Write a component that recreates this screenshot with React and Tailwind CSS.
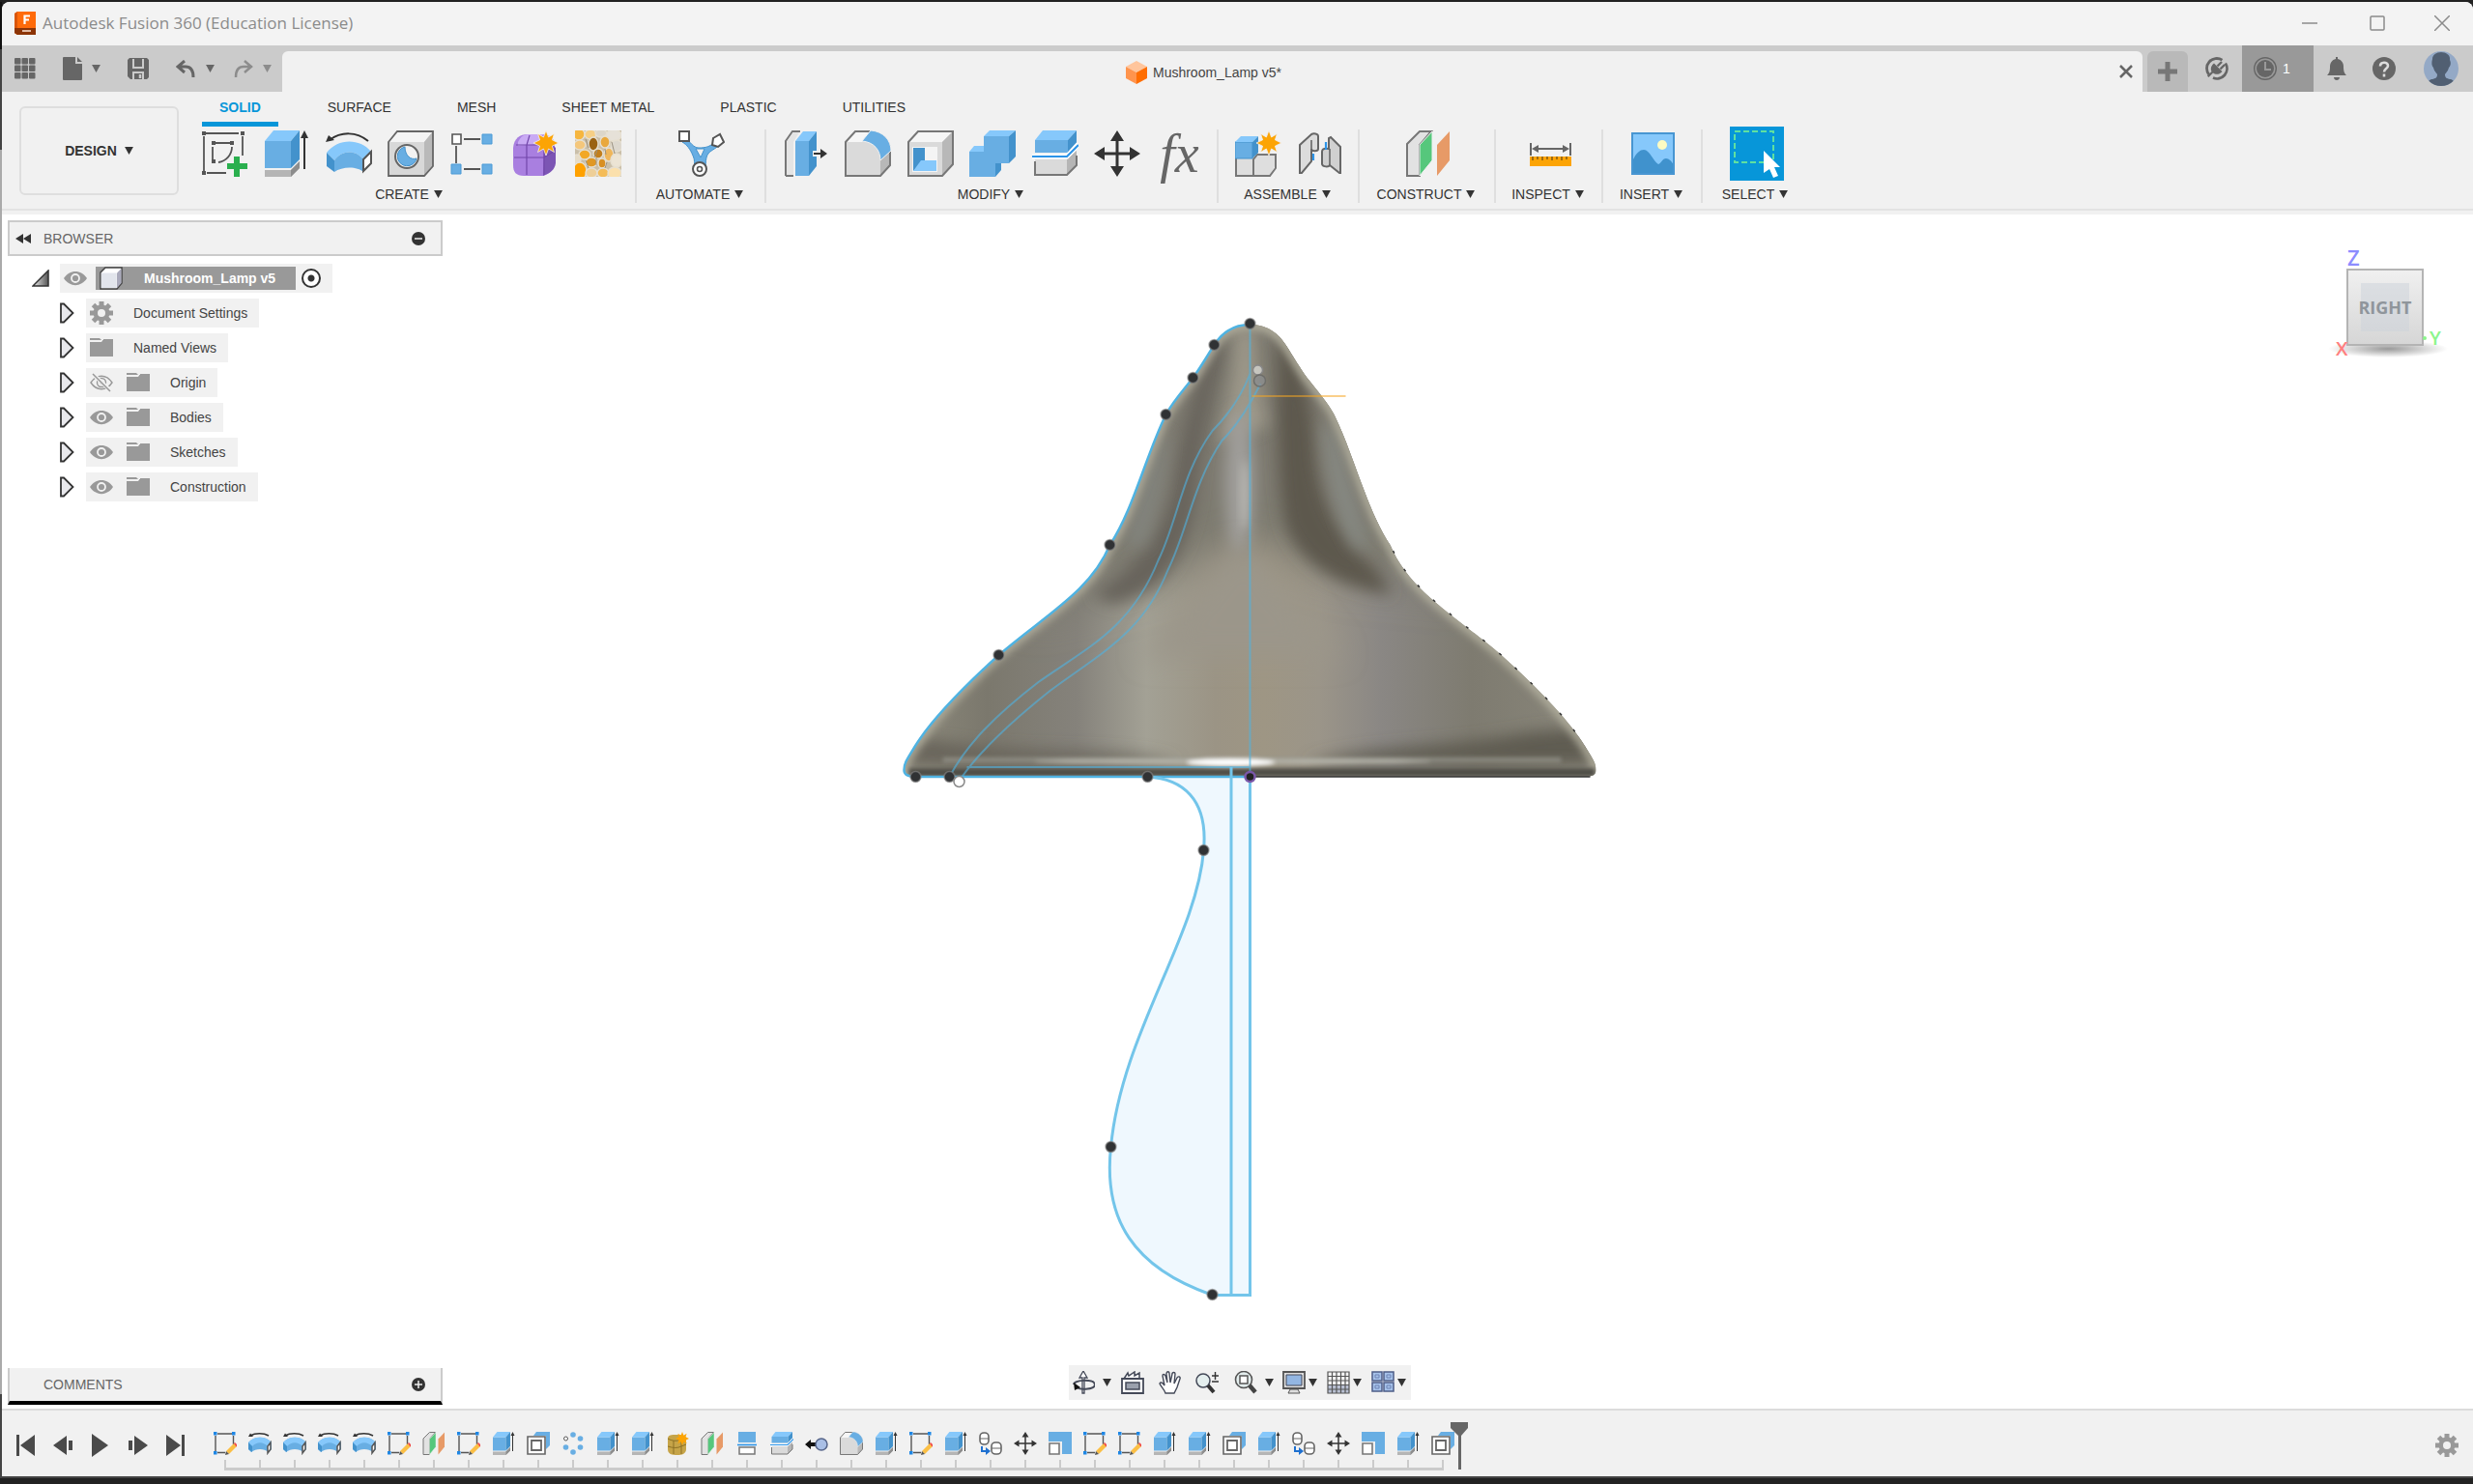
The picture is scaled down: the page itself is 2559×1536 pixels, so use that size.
import React from "react";

const DARK = "#555";
const BLUE = "#68aee3";
const BLUE_L = "#86c8fb";
const BLUE_D = "#4392cc";

function Icon({ size = 48, vb = "0 0 48 48", className = "", children }) {
  return (
    <svg width={size} height={size} viewBox={vb} className={className} fill="none" aria-hidden="true">
      {children}
    </svg>
  );
}

function Caret({ color = "#333" }) {
  return (
    <svg width="9" height="8" viewBox="0 0 10 9" className="shrink-0" aria-hidden="true">
      <path d="M0 0h10L5 9z" fill={color} />
    </svg>
  );
}

const starPath = "M0-13 2.6-6 8.5-9.5 6.4-3.2 13 0 6.4 3.2 8.5 9.5 2.6 6 0 13-2.6 6-8.5 9.5-6.4 3.2-13 0-6.4-3.2-8.5-9.5-2.6-6z";

/* ---------- ribbon icons ---------- */
const NewSketch = () => (
  <Icon>
    <path d="M5 3h34M3 6v36M43 6v20M6 44h20M14 13h16M12 17v13M32 17c0 8-6 15-14 16" stroke={DARK} strokeWidth="1.8" />
    <path d="M1 1h4v4H1zM41 1h4v4h-4zM1 42h4v4H1zM11 11h4v4h-4zM30 11h4v4h-4zM11 30h4v4h-4z" fill={DARK} />
    <path d="M34 27h6v7h8v6h-8v8h-6v-8h-7v-6h7z" fill="#2aaf4e" />
  </Icon>
);
const Extrude = ({ size }) => (
  <Icon size={size}>
    <path d="M2 41h27l9-9v7l-9 9H2z" fill="#b5b5b5" />
    <path d="M29 41l9-9v7l-9 9z" fill="#8d8d8d" />
    <path d="M2 11h27v28H2z" fill={BLUE} />
    <path d="M2 11 11 0h27l-9 11z" fill={BLUE_L} />
    <path d="M29 11 38 0v30l-9 9z" fill={BLUE_D} />
    <path d="M43 40V6" stroke="#333" strokeWidth="2" />
    <path d="M39 8l4-8 4 8z" fill="#333" />
  </Icon>
);
const Revolve = ({ size }) => (
  <Icon size={size}>
    <path d="M4 10C16 1 32 1 44 11" stroke="#333" strokeWidth="2" />
    <path d="M0 12 3 5l6 5z" fill="#333" />
    <path d="M1 23C13 8 35 8 47 22l-8 8C31 20 17 20 9 31z" fill={BLUE_L} />
    <path d="M1 23v14l8 6V31z" fill={BLUE_D} />
    <path d="M9 31C17 20 31 20 39 30v13C33 37 17 37 9 43z" fill={BLUE} />
    <path d="M39 30l8-8v12l-8 8z" fill="#fff" stroke={DARK} strokeWidth="2" />
  </Icon>
);
const Hole = () => (
  <Icon>
    <path d="M1 12 10 1h37v36l-9 10H1z" fill="#d8d8d8" />
    <path d="M1 12 10 1h37l-9 11z" fill="#f4f4f4" />
    <path d="M38 12 47 1v36l-9 10z" fill="#b9b9b9" />
    <path d="M1 12 10 1h37v36l-9 10H1z" stroke="#666" strokeWidth="1.8" />
    <circle cx="20" cy="27" r="12" fill="#f2f2f2" stroke="#666" strokeWidth="2" />
    <path d="M18 17a10 10 0 1 0 12 12c-6 2-12-3-12-12z" fill={BLUE} stroke={BLUE_D} />
  </Icon>
);
const Pattern = () => (
  <Icon>
    <path d="M14 9h17M6 16v18M14 40h17" stroke={DARK} strokeWidth="1.8" />
    <path d="M2 4h9v10H2z" fill="#fff" stroke={DARK} strokeWidth="1.6" />
    <path d="M33 4h10v10H33zM1 35h10v10H1zM33 35h10v10H33z" fill={BLUE} stroke="#4a9ad6" />
  </Icon>
);
const Form = () => (
  <Icon>
    <path d="M1 18C2 8 8 4 16 4h14c10 0 14 5 14 12v18c-1 8-6 11-12 13H12C4 47 1 43 1 36z" fill="#a97fe0" />
    <path d="M32 47c7-3 12-6 13-13V18c-3-4-8-4-12-3z" fill="#7c55b4" />
    <path d="M6 12C9 6 12 4 18 4h14l-4 10-22 2z" fill="#c9aaf4" />
    <path d="M18 5l-3 10v31M2 28h31l11-7M33 16v30M4 15h28" stroke="#7247aa" strokeWidth="1.2" />
    <path d={starPath} transform="translate(35 13)" fill="#fca405" stroke="#f1f1f1" strokeWidth=".8" />
  </Icon>
);
const Voronoi = () => {
  const cells = [
    [4, 4, 6, 6, "#f6b63f"], [16, 4, 6, 5, "#f6cf85"], [27, 3, 6, 4, "#dcd6ca"], [40, 5, 8, 6, "#e6e1d8"],
    [5, 15, 6, 5, "#f4c77c"], [19, 14, 5, 7, "#9a6213"], [31, 12, 5, 6, "#e9a83c"], [43, 16, 6, 6, "#ddd8ce"],
    [10, 25, 6, 5, "#f2a827"], [24, 24, 5, 5, "#c27f1d"], [35, 25, 5, 7, "#efb65a"], [2, 30, 4, 5, "#e6dcc8"],
    [17, 33, 6, 5, "#e09825"], [28, 34, 4, 5, "#d88f22"], [43, 31, 6, 7, "#ece4d4"], [5, 42, 7, 9, "#ffa100"],
    [17, 44, 6, 5, "#eecf98"], [29, 44, 6, 5, "#f4bc58"], [41, 44, 7, 6, "#fbe0ac"],
  ];
  return (
    <Icon>
      <path d="M0 0h48v48H0z" fill="#cabfa9" />
      {cells.map(([x, y, rx, ry, c], i) => (
        <ellipse key={i} cx={x} cy={y} rx={rx} ry={ry} fill={c} stroke="#e6dfd0" strokeWidth="1.4" />
      ))}
      <path d="M11 9l3 9M23 20l-3 8M31 19l1 6M22 28v8M33 33l-2 6M11 31l3 8M38 12l3 12" stroke="#9a9180" strokeWidth="1" />
    </Icon>
  );
};
const Automate = () => (
  <Icon>
    <path d="M8 9c4 2 7 9 13 9 7 0 12-1 16-6l4 4c-5 5-10 5-12 12-1 5-1 8 0 12H16c1-5 1-10-1-14C12 19 9 15 4 12z" fill={BLUE} stroke={BLUE_D} />
    <path d="M18 19h9l-4 9z" fill="#f1f1f1" stroke={BLUE_D} />
    <path d="M1 1h10v10H1z" fill="#fff" stroke={DARK} strokeWidth="2" />
    <path d="M36 8l7-4 4 8-6 5-6-2z" fill="#fff" stroke={DARK} strokeWidth="2" />
    <circle cx="22" cy="40" r="7" fill="#fff" stroke={DARK} strokeWidth="2" />
    <circle cx="22" cy="40" r="2.5" stroke={DARK} strokeWidth="1.6" />
  </Icon>
);
const PressPull = () => (
  <Icon>
    <path d="M3 47V11L10 1h8M3 47h8" stroke="#777" strokeWidth="2" />
    <path d="M4 12 11 2h6l-6 10v34H4z" fill="#e4e4e4" />
    <path d="M13 11h14v36H13z" fill={BLUE} />
    <path d="M13 11 21 1h14l-8 10z" fill={BLUE_L} />
    <path d="M27 11 35 1v36l-8 10z" fill={BLUE_D} />
    <path d="M31 21h9v6h-9z" fill="#f1f1f1" />
    <path d="M32 24h9" stroke="#333" strokeWidth="2" />
    <path d="M39 19v10l7-5z" fill="#333" />
  </Icon>
);
const Fillet = ({ size }) => (
  <Icon size={size}>
    <path d="M1 12 11 1h15c12 1 21 9 21 20v15L37 47H1z" fill="#dadada" />
    <path d="M1 12 11 1h15l-8 11z" fill="#f6f6f6" />
    <path d="M37 31l10-9v14L37 47z" fill="#b8b8b8" />
    <path d="M1 12 11 1h15c12 1 21 9 21 20v15L37 47H1z" stroke="#777" strokeWidth="2" />
    <path d="M18 11 27 0c13 1 21 10 21 21L37 31c0-11-7-19-19-20z" fill={BLUE} stroke="#f1f1f1" />
  </Icon>
);
const Shell = () => (
  <Icon>
    <path d="M1 12 11 1h36v34L36 47H1z" fill="#dadada" />
    <path d="M1 12 11 1h36L36 12z" fill="#f6f6f6" />
    <path d="M36 12 47 1v34L36 47z" fill="#b8b8b8" />
    <path d="M1 12 11 1h36v34L36 47H1z" stroke="#777" strokeWidth="2" />
    <path d="M5 17h26v26H5z" fill="#f4f4f4" />
    <path d="M6 18h12v14L6 42z" fill={BLUE_D} />
    <path d="M6 42 14 31h16v11z" fill={BLUE_L} />
  </Icon>
);
const Combine = () => (
  <Icon>
    <path d="M0 22h15V6h26v28H27v14H0z" fill={BLUE} />
    <path d="M0 22l5-6h10v6zM15 6l6-6h27l-7 6z" fill={BLUE_L} />
    <path d="M41 6 48 0v27l-7 7zM27 34h6v7l-6 7z" fill={BLUE_D} />
  </Icon>
);
const SplitBody = ({ size }) => (
  <Icon size={size}>
    <path d="M3 30h33v16H3zM36 30l10-9v15l-10 10z" fill="#dadada" />
    <path d="M36 30l10-9v15l-10 10z" fill="#b5b5b5" />
    <path d="M3 32v14h33l10-10V26" stroke="#777" strokeWidth="2" />
    <path d="M3 10h34v13H3z" fill={BLUE} />
    <path d="M3 10 11 0h35l-9 10z" fill={BLUE_L} />
    <path d="M37 10 46 0v13l-9 10z" fill={BLUE_D} />
    <path d="M0 27h36l12-13" stroke="#fff" strokeWidth="5" />
    <path d="M0 27h36l12-12" stroke="#2c94e8" strokeWidth="2.2" />
  </Icon>
);
const Move = ({ size }) => (
  <Icon size={size}>
    <path d="M24 8v32M8 24h32" stroke="#333" strokeWidth="3" />
    <path d="M24 0l7 11H17zM24 48l7-11H17zM0 24l11-7v14zM48 24l-11-7v14z" fill="#333" />
  </Icon>
);
const Assemble = () => (
  <Icon>
    <path d="M1 28h18v19H1zM19 28l7-3h15v12l-5 10H19z" fill="#dedede" />
    <path d="M1 29v18h35l6-8V25H23l-4 5v17" stroke="#777" strokeWidth="2" />
    <path d="M0 12h18v17H0z" fill={BLUE} stroke={BLUE_D} />
    <path d="M0 12l6-6h18l-6 6z" fill={BLUE_L} />
    <path d="M18 12l6-6v17l-6 6z" fill={BLUE_D} />
    <path d={starPath} transform="translate(35 13)" fill="#fca405" stroke="#f1f1f1" strokeWidth=".8" />
  </Icon>
);
const Joint = () => (
  <Icon>
    <path d="M3 15 15 4c2-1 7-1 7 2v13c0 3-7 3-7 0v13L5 44H3z" fill="#dcdcdc" stroke="#666" strokeWidth="2" />
    <path d="M45 17 35 7l-2 1v11c-6-1-7 1-7 3v13c1 3 7 3 8 1l10 8h1z" fill="#d0d0d0" stroke="#666" strokeWidth="2" />
    <path d="M34 19v17M15 10v10" stroke="#666" strokeWidth="1.6" />
    <path d="M17 24v7M30 12v8" stroke="#2c94e8" strokeWidth="2.2" />
  </Icon>
);
const Plane = ({ size }) => (
  <Icon size={size}>
    <path d="M2 14 15 1h12L15 15v32H2z" fill="#e2e2e2" stroke="#777" strokeWidth="2" />
    <path d="M15 15 28 1v30L15 47z" fill="#56c77c" stroke="#f1f1f1" />
    <path d="M33 15 46 1v30L33 47z" fill="#e79a67" />
  </Icon>
);
const Measure = () => (
  <Icon>
    <path d="M4 13v13M45 13v13M7 19h35" stroke="#666" strokeWidth="2" />
    <path d="M5 19l7-4v8zM44 19l-7-4v8z" fill="#666" />
    <path d="M3 27h43v10H3z" fill="#fca405" />
    <path d="M6 27v4M11 27v3M16 27v4M21 27v3M26 27v4M31 27v3M36 27v4M41 27v3" stroke="#7a5411" strokeWidth="1.4" />
  </Icon>
);
const InsertPic = () => (
  <Icon>
    <path d="M2 3h43v42H2z" fill="#86c8fb" />
    <path d="M2 32c4-9 8-12 12-12 6 0 10 12 15 15 3-1 4-6 8-6 3 0 6 3 8 7v9H2z" fill="#4092cd" />
    <circle cx="33" cy="15" r="5" fill="#fdfbc2" />
    <path d="M2 3h43v42H2z" stroke="#4896d2" strokeWidth="2" />
  </Icon>
);
const Select = () => (
  <svg width="56" height="56" viewBox="0 0 56 56" fill="none" aria-hidden="true">
    <path d="M0 0h56v56H0z" fill="#0796d9" />
    <path d="M5 5h40v32H5z" stroke="#5fe0a0" strokeWidth="2" strokeDasharray="6 3" />
    <path d="M35 25v23l6-4 4 9 5-2-4-9h6z" fill="#fff" />
  </svg>
);
const Fx = () => (
  <span className="flex h-12 w-12 items-center justify-center font-['Liberation_Serif',serif] text-[56px] leading-[48px] italic text-[#666]">fx</span>
);

/* ---------- timeline icons ---------- */
const SketchT = () => (
  <Icon size={24} vb="0 0 24 24">
    <path d="M4 2h15M2 4v16M20.500 4v9M4 21.500h8" stroke={DARK} strokeWidth="1.4" />
    <path d="M0 0h3.500v3.500H0zM19 0h3.500v3.500H19zM0 20h3.500v3.500H0z" fill="#1e87e5" />
    <path d="M21 12l3 3-8 8-3-3z" fill="#fbbf45" />
    <path d="M21 12l1-1 3 3-1.500 1.500z" fill="#f04848" />
    <path d="M13 20l3 3-4 1z" fill="#555" />
  </Icon>
);
const RevolveT = () => (
  <Icon size={24} vb="0 0 24 24">
    <path d="M2 4c5-3 14-3 19 0" stroke="#333" strokeWidth="1.500" />
    <path d="M0 5l2-3.500L5 5z" fill="#333" />
    <path d="M0 11C6 4 18 4 24 11v7l-3 3c-5-4-13-4-18 0l-3-3z" fill={BLUE} />
    <path d="M0 11C6 4 18 4 24 11l-4 4c-5-5-11-5-16 0z" fill={BLUE_L} />
    <path d="M0 11l4 4v6l-4-3z" fill={BLUE_D} />
    <path d="M20 15l3-4v7l-3 4z" fill="#fff" stroke={DARK} strokeWidth="1.500" />
  </Icon>
);
const BoxCopyT = () => (
  <Icon size={24} vb="0 0 24 24">
    <path d="M7 4l3-4h14v14l-4 4V4z" fill={BLUE} />
    <path d="M1 5h18v18H1z" fill="#fff" stroke="#666" strokeWidth="1.6" />
    <path d="M5 9h10v10H5z" stroke="#666" strokeWidth="1.8" />
  </Icon>
);
const CircT = () => (
  <Icon size={24} vb="0 0 24 24">
    {[[12, 3], [19.500, 7], [19.500, 16], [12, 21], [4.500, 16]].map(([x, y]) => (
      <circle key={x + "-" + y} cx={x} cy={y} r="2.8" fill={BLUE} />
    ))}
    <circle cx="4.500" cy="7" r="2" fill="#fff" stroke={DARK} />
  </Icon>
);
const FormT = () => (
  <Icon size={24} vb="0 0 24 24">
    <path d="M2 7c0-4 4-4 9-4s10 0 10 4v11c0 5-5 6-9 6-6 0-10-1-10-6z" fill="#c6a448" />
    <path d="M2 7c5 3 11 3 14 0v16M2 15c6 2 10 2 14 0l5-2M8 9v14" stroke="#8d7124" />
    <path d={starPath} transform="translate(17 7) scale(.54)" fill="#fca405" />
  </Icon>
);
const SplitFaceT = () => (
  <Icon size={24} vb="0 0 24 24">
    <path d="M3 0h18v11H3z" fill={BLUE} />
    <path d="M4 16h16v7H4z" fill="#fff" stroke="#777" strokeWidth="1.5" />
    <path d="M2 13.500h20" stroke="#2c94e8" strokeWidth="1.600" />
  </Icon>
);
const AlignT = () => (
  <Icon size={24} vb="0 0 24 24">
    <path d="M0 13l6-5v3h6v4H6v3z" fill="#111" />
    <circle cx="17" cy="13" r="6" fill="#a9bfe6" stroke="#56658a" strokeWidth="1.500" />
  </Icon>
);
const JointT = () => (
  <Icon size={24} vb="0 0 24 24">
    <rect x="1" y="1" width="9" height="12" rx="4" fill="#fff" stroke="#666" strokeWidth="1.600" />
    <rect x="13" y="11" width="10" height="12" rx="4" fill="#fff" stroke="#666" strokeWidth="1.600" />
    <path d="M1 7h9M13 17h10" stroke="#666" />
    <path d="M3 15v5h5" stroke="#1e70d0" strokeWidth="2" />
    <path d="M7 16l5 4-5 4z" fill="#1e70d0" />
  </Icon>
);
const ScaleT = () => (
  <Icon size={24} vb="0 0 24 24">
    <path d="M0 0h24v23H14V10H0z" fill={BLUE} />
    <path d="M1 12h10v11H1z" fill="#fff" stroke="#777" strokeWidth="1.600" />
  </Icon>
);
const T = {
  sk: ["Sketch", SketchT], re: ["Revolve", RevolveT], pl: ["Plane", () => <Plane size={24} />],
  ex: ["Extrude", () => <Extrude size={24} />], bx: ["Offset", BoxCopyT], ci: ["Circular pattern", CircT],
  fo: ["Form", FormT], sf: ["Split face", SplitFaceT], sb: ["Split body", () => <SplitBody size={24} />],
  al: ["Align", AlignT], fi: ["Fillet", () => <Fillet size={24} />], jo: ["Joint", JointT],
  mv: ["Move", () => <Move size={24} />], sc: ["Scale", ScaleT],
};
const timeline = "sk re re re re sk pl sk ex bx ci ex ex fo pl sf sb al fi ex sk ex jo mv sc sk sk ex ex bx ex jo mv sc ex bx".split(" ");

/* ---------- small glyphs ---------- */
const Gear = ({ size = 24 }) => (
  <Icon size={size} vb="-12 -12 24 24">
    {[0, 45, 90, 135].map((a) => (
      <rect key={a} x="-2.500" y="-12" width="5" height="24" fill="#999" transform={`rotate(${a})`} />
    ))}
    <circle r="8.500" fill="#999" />
    <circle r="4" fill="#f1f1f1" />
  </Icon>
);
const Folder = () => (
  <Icon size={24} vb="0 0 24 24">
    <path d="M0 2h10l2 2H0zM0 6h12l2-3h10v18H0z" fill="#999" />
    <path d="M0 5h12l2-2" stroke="#f1f1f1" />
  </Icon>
);
const Eye = ({ off }) =>
  off ? (
    <Icon size={24} vb="0 0 24 24">
      <path d="M1 12c6-9 16-9 22 0-6 9-16 9-22 0z" stroke="#999" strokeWidth="1.400" />
      <circle cx="12" cy="12" r="4.500" stroke="#999" strokeWidth="1.400" />
      <circle cx="12" cy="12" r="1.500" stroke="#999" />
      <path d="M3 3l18 17" stroke="#f1f1f1" strokeWidth="4" />
      <path d="M3 3l18 18" stroke="#999" strokeWidth="1.600" />
    </Icon>
  ) : (
    <Icon size={24} vb="0 0 24 24">
      <path d="M0 12c6-9.500 18-9.500 24 0-6 9.500-18 9.500-24 0z" fill="#999" />
      <circle cx="12" cy="12" r="4" stroke="#f1f1f1" strokeWidth="1.800" />
    </Icon>
  );

/* ---------- header ---------- */
function TitleBar() {
  return (
    <header className="flex h-[45px] items-center bg-[#f3f3f3] pb-[2px] pl-[13px]">
      <svg width="22" height="24" viewBox="0 0 22 24" aria-hidden="true">
        <path d="M0 2l3-2h19v24H3l-3-2z" fill="#ff6b0a" />
        <path d="M0 2l3-2v24l-3-2z" fill="#d9560a" />
        <path d="M0 17h22v7H3l-3-2z" fill="#8c3406" />
        <path d="M10.500 13V4.500h5.500M10.500 8.500h4.500" stroke="#fff" strokeWidth="2.200" fill="none" />
        <path d="M8 20h9" stroke="#e0b9a2" strokeWidth="2" />
      </svg>
      <h1 className="ml-[7px] font-['Open_Sans',sans-serif] text-[17px] text-[#8b8b8b]">Autodesk Fusion 360 (Education License)</h1>
      <div className="ml-auto flex">
        <button aria-label="Minimize" className="flex h-[43px] w-[70px] items-center justify-center"><svg width="16" height="16"><path d="M0 8h16" stroke="#8b8b8b" strokeWidth="1.500" /></svg></button>
        <button aria-label="Maximize" className="flex h-[43px] w-[70px] items-center justify-center"><svg width="16" height="16" fill="none"><rect x="1" y="1" width="14" height="14" rx="1" stroke="#8b8b8b" strokeWidth="1.500" /></svg></button>
        <button aria-label="Close window" className="flex h-[43px] w-[64px] items-center justify-center"><svg width="16" height="16"><path d="M0 0l16 16M16 0 0 16" stroke="#8b8b8b" strokeWidth="1.500" /></svg></button>
      </div>
    </header>
  );
}

function TabStrip() {
  return (
    <div className="flex h-12 items-end bg-[#cbcbcb]">
      <nav aria-label="Quick access" className="flex h-12 w-[290px] shrink-0 items-center pl-[13px]">
        <button aria-label="Data panel"><svg width="22" height="22" fill="#666" className="block">
          {[0, 7.500, 15].map((y) => [0, 7.500, 15].map((x) => <rect key={x + "/" + y} x={x} y={y} width="6.500" height="6.500" rx="1" />))}
        </svg></button>
        <button aria-label="File" className="ml-7 flex items-center gap-[10px]">
          <svg width="20" height="24" viewBox="0 0 20 24"><path d="M1 0h12v7h7v16a1 1 0 0 1-1 1H1a1 1 0 0 1-1-1V1a1 1 0 0 1 1-1zM15 0l5 5h-5z" fill="#666" /></svg>
          <Caret color="#666" />
        </button>
        <button aria-label="Save" className="ml-7">
          <svg width="22" height="22" viewBox="0 0 22 22" className="block"><path d="M2 0h18l2 2v18l-2 2H3l-3-3V2z" fill="#666" /><path d="M6 1v9h10V1M6 22v-7h10v7" fill="none" stroke="#cbcbcb" strokeWidth="2" /><path d="M13 17v4" stroke="#cbcbcb" strokeWidth="2.500" /></svg>
        </button>
        <button aria-label="Undo" className="ml-7 flex items-center gap-[11px]">
          <svg width="20" height="18" viewBox="0 0 20 18"><path d="M9 1 2 7l7 6M2 7h8c6 0 8 4 8 11" fill="none" stroke="#666" strokeWidth="3" /></svg>
          <Caret color="#666" />
        </button>
        <button aria-label="Redo" className="ml-[20px] flex items-center gap-[10px]">
          <svg width="20" height="18" viewBox="0 0 20 18"><path d="M11 1l7 6-7 6M18 7h-8c-6 0-8 4-8 11" fill="none" stroke="#8c8c8c" strokeWidth="2.500" /></svg>
          <Caret color="#8c8c8c" />
        </button>
      </nav>
      <div className="flex h-[42px] flex-1 items-center rounded-t-md bg-[#f1f1f1] pl-4">
        <div className="flex flex-1 items-center justify-center gap-[6px] pt-[2px] text-[#444]">
          <svg width="22" height="24" viewBox="0 0 22 24" aria-hidden="true"><path d="M11 0l11 6-11 6L0 6z" fill="#ffc59c" /><path d="M0 6l11 6v12L0 18z" fill="#ff944d" /><path d="M22 6l-11 6v12l11-6z" fill="#ff6d00" /></svg>
          <span>Mushroom_Lamp v5*</span>
        </div>
        <button aria-label="Close tab" className="flex w-[34px] justify-center"><svg width="14" height="14"><path d="M1 1l12 12M13 1 1 13" stroke="#666" strokeWidth="2.500" /></svg></button>
      </div>
      <button aria-label="New tab" className="ml-[5px] flex h-[42px] w-[42px] items-center justify-center rounded-t-md bg-[#b9b9b9]">
        <svg width="20" height="20"><path d="M10 0v20M0 10h20" stroke="#777" strokeWidth="5" /></svg>
      </button>
      <div className="flex h-12 items-center">
        <button aria-label="Extensions" className="flex w-14 justify-center pl-[4px]">
          <svg width="24" height="24" viewBox="0 0 24 24" fill="none">
            <path d="M4 18.500A10.300 10.300 0 0 1 17.500 3.200M20.800 6.500A10.300 10.300 0 0 1 8 21.500" stroke="#666" strokeWidth="2.800" />
            <path d="M9 6.500 17.500 15c-3 3.500-7 3.500-9.500 1.500L3.500 21 2 19.500 6.500 15C5 12 6 9 9 6.500z" fill="#666" />
            <path d="M12.500 9.500 17 5M15.500 12.500 20 8" stroke="#666" strokeWidth="2.400" />
          </svg>
        </button>
        <button aria-label="Job status" className="flex h-12 w-[74px] items-center gap-[6px] bg-[#999] pl-3 text-[14px] text-white">
          <svg width="24" height="24" viewBox="0 0 24 24" fill="none"><circle cx="12" cy="12" r="11.300" stroke="#666" strokeWidth="1.400" /><circle cx="12" cy="12" r="9" fill="#666" /><path d="M12 5v8h6" stroke="#999" strokeWidth="2" /></svg>
          1
        </button>
        <button aria-label="Notifications" className="flex w-[48px] justify-center">
          <svg width="20" height="24" viewBox="0 0 20 24" fill="#666"><path d="M9 0h2v2c4 1 6 4 6 8 0 5 1 7 3 9H0c2-2 3-4 3-9 0-4 2-7 6-8zM7 21h6c0 4-6 4-6 0z" /></svg>
        </button>
        <button aria-label="Help" className="flex w-[50px] justify-center">
          <svg width="24" height="24" viewBox="0 0 24 24" fill="none"><circle cx="12" cy="12" r="12" fill="#666" /><path d="M8 9.500C8 4.500 16 4.500 16 9c0 3-4 3-4 6.500M12 17.500v3" stroke="#ddd" strokeWidth="2.600" /></svg>
        </button>
        <button aria-label="Account" className="flex w-[67px] justify-center">
          <svg width="36" height="36" viewBox="0 0 36 36"><defs><clipPath id="av"><circle cx="18" cy="18" r="18" /></clipPath></defs><circle cx="18" cy="18" r="18" fill="#94a9c6" /><path clipPath="url(#av)" d="M9 8c0-4 4-7 9-7s10 3 9 8c2 4 0 7-1 8-1 4-3 5-4 7 0 4 2 4 5 5 3 0 5 2 5 7H4c0-5 2-7 5-7 3-1 5-1 5-5-1-2-3-3-4-7-2-2-2-5-1-9z" fill="#515f72" /></svg>
        </button>
      </div>
    </div>
  );
}

/* ---------- ribbon ---------- */
function Group({ label, icons, width, iconsWidth = "w-auto", last }) {
  return (
    <section className={`relative flex shrink-0 flex-col items-center ${width}`}>
      <div className={`flex h-14 items-center justify-between ${iconsWidth}`}>
        {icons.map(([name, I]) => (
          <button key={name} aria-label={name}><I /></button>
        ))}
      </div>
      <button className="mt-[4px] flex h-5 items-center gap-[5px] pr-[4px] text-[#333]">{label}<Caret /></button>
      {!last && <div className="absolute top-[3px] right-0 h-[76px] w-[2px] bg-[#dfdfdf]" />}
    </section>
  );
}

function Ribbon() {
  const tabs = ["SURFACE", "MESH", "SHEET METAL", "PLASTIC", "UTILITIES"];
  return (
    <div className="flex h-[123px] border-b-2 border-[#e3e3e3] bg-[#f1f1f1]">
      <button className="mt-[15px] ml-[18px] flex h-[92px] w-[165px] shrink-0 items-center justify-center gap-2 rounded-md border-2 border-[#dedede] font-bold text-[#333]">
        DESIGN<Caret />
      </button>
      <div className="ml-[6px] flex-1">
        <div role="tablist" className="flex h-9 gap-[34px] pl-[18px] text-[#333]">
          <button role="tab" aria-selected="true" className="h-9 border-b-[5px] border-[#0796d9] px-[18px] font-bold text-[#0796d9]">SOLID</button>
          {tabs.map((t) => (
            <button role="tab" aria-selected="false" key={t} className="h-9 border-b-[5px] border-transparent px-[17px]">{t}</button>
          ))}
        </div>
        <div className="flex">
          <Group label="CREATE" width="w-[468px]" iconsWidth="w-[435px]" icons={[["Create sketch", NewSketch], ["Extrude", Extrude], ["Revolve", Revolve], ["Hole", Hole], ["Rectangular pattern", Pattern], ["Create form", Form], ["Volumetric lattice", Voronoi]]} />
          <Group label="AUTOMATE" width="w-[134px]" icons={[["Automated modeling", Automate]]} />
          <Group label="MODIFY" width="w-[468px]" iconsWidth="w-[435px]" icons={[["Press pull", PressPull], ["Fillet", Fillet], ["Shell", Shell], ["Combine", Combine], ["Split body", SplitBody], ["Move", Move], ["Parameters", Fx]]} />
          <Group label="ASSEMBLE" width="w-[146px]" iconsWidth="w-[112px]" icons={[["New component", Assemble], ["Joint", Joint]]} />
          <Group label="CONSTRUCT" width="w-[141px]" icons={[["Offset plane", Plane]]} />
          <Group label="INSPECT" width="w-[111px]" icons={[["Measure", Measure]]} />
          <Group label="INSERT" width="w-[103px]" icons={[["Canvas", InsertPic]]} />
          <Group label="SELECT" width="w-[112px]" icons={[["Select tool", Select]]} last />
        </div>
      </div>
    </div>
  );
}

/* ---------- browser tree ---------- */
const tree = [
  { label: "Document Settings", gear: true },
  { label: "Named Views" },
  { label: "Origin", eye: "off" },
  { label: "Bodies", eye: "on" },
  { label: "Sketches", eye: "on" },
  { label: "Construction", eye: "on" },
];

function Browser() {
  return (
    <aside className="w-[450px]">
      <div className="flex h-[37px] items-center border-2 border-[#cbcbcb] bg-[#f1f1f1] pr-[16px] pl-[6px] text-[#666]">
        <button aria-label="Collapse"><svg width="16" height="10" className="block"><path d="M8 0v10L0 5zM16 0v10L8 5z" fill="#333" /></svg></button>
        <h2 className="ml-[13px] flex-1">BROWSER</h2>
        <button aria-label="Hide browser"><svg width="14" height="14" className="block"><circle cx="7" cy="7" r="7" fill="#333" /><path d="M3 7h8" stroke="#eee" strokeWidth="1.500" /></svg></button>
      </div>
      <ul className="mt-2 flex flex-col gap-[6px]">
        <li className="flex h-[30px] items-center pl-[25px]">
          <button aria-label="Collapse root">
            <svg width="18" height="18" className="block"><defs><linearGradient id="tri"><stop offset="0" stopColor="#eee" /><stop offset="1" stopColor="#555" /></linearGradient></defs><path d="M1 17h16V1z" fill="url(#tri)" stroke="#333" strokeWidth="1.500" /></svg>
          </button>
          <div className="ml-[11px] flex h-[30px] items-center gap-[6px] bg-[#f1f1f1] pr-3 pl-[4px]">
            <button aria-label="Toggle visibility"><Eye /></button>
            <div className="ml-[3px] flex h-6 w-[207px] items-center gap-[22px] bg-[#999] pl-[4px] font-bold text-white">
              <svg width="24" height="24" viewBox="0 0 24 24"><path d="M1 6l5-5h17v16l-5 6H1z" fill="#fff" stroke="#444" strokeWidth="1.500" /><path d="M1.700 6.500h16V22h-16z" fill="#e2e5ec" /><path d="M18 6.500 22.500 2v15L18 22z" fill="#aab" /></svg>
              Mushroom_Lamp v5
            </div>
            <label className="flex items-center">
              <input type="radio" defaultChecked aria-label="Activate component" className="h-5 w-5 appearance-none rounded-full border-2 border-[#333] bg-[radial-gradient(circle,#333_0_3px,#fff_4px)]" />
            </label>
          </div>
        </li>
        {tree.map((n) => (
          <li key={n.label} className="flex h-[30px] items-center pl-[53px]">
            <button aria-label={"Expand " + n.label}>
              <svg width="16" height="22" className="block"><path d="M2 1.500h3L14.500 11 5 20.500H2z" fill="#e8e8ec" stroke="#333" strokeWidth="1.800" /></svg>
            </button>
            <div className="ml-[12px] flex h-[30px] items-center bg-[#f1f1f1] pr-[12px] pl-[4px] text-[#444]">
              {n.eye && <button className="mr-[14px]" aria-label="Toggle visibility"><Eye off={n.eye === "off"} /></button>}
              {n.gear ? <Gear /> : <Folder />}
              <span className="ml-[21px]">{n.label}</span>
            </div>
          </li>
        ))}
      </ul>
    </aside>
  );
}

/* ---------- model ---------- */
const leftEdge = "C1274 336 1263 346 1256 357C1247 371 1242 380 1234 391C1223 405 1213 416 1206 429C1185 472 1172 528 1148 564C1128 612 1082 636 1033 678C1000 708 965 742 946 773C938 786 935 790 935 797C935 802 940 804 947 804";
const capPath = "M1293 336" + leftEdge + "H1639C1647 804 1651 802 1651 797C1651 790 1648 786 1640 773C1621 742 1586 708 1553 678C1504 636 1458 612 1438 564C1414 528 1401 472 1380 429C1373 416 1363 405 1352 391C1344 380 1339 371 1330 357C1323 346 1312 336 1293 336z";
const knots = [[1293, 335], [1256, 357], [1234, 391], [1206, 429], [1148, 564], [1033, 678], [947, 804], [982, 804], [1187, 804], [1245, 880], [1149, 1187], [1254, 1340]];

function Model() {
  return (
    <svg viewBox="900 222 760 1236" className="h-full w-full" role="img" aria-label="Mushroom lamp, right view">
      <defs>
        <linearGradient id="low" gradientUnits="userSpaceOnUse" x1="935" x2="1651" y1="0" y2="0">
          <stop offset="0" stopColor="#8c897b" /><stop offset=".12" stopColor="#7b786d" /><stop offset=".25" stopColor="#85827b" />
          <stop offset=".35" stopColor="#a3a195" /><stop offset=".45" stopColor="#9b9485" /><stop offset=".52" stopColor="#9e9684" />
          <stop offset=".6" stopColor="#9b9589" /><stop offset=".69" stopColor="#8a8784" /><stop offset=".82" stopColor="#7e7b70" /><stop offset="1" stopColor="#8a877b" />
        </linearGradient>
        <clipPath id="cap"><path d={capPath} /></clipPath>
        <filter id="b2" x="-50%" y="-200%" width="200%" height="500%"><feGaussianBlur stdDeviation="2" /></filter>
        <filter id="b4" x="-50%" y="-50%" width="200%" height="200%"><feGaussianBlur stdDeviation="4" /></filter>
        <filter id="b8" x="-80%" y="-50%" width="260%" height="200%"><feGaussianBlur stdDeviation="8" /></filter>
        <filter id="b14" x="-50%" y="-50%" width="200%" height="200%"><feGaussianBlur stdDeviation="14" /></filter>
        <filter id="b22" x="-50%" y="-50%" width="200%" height="200%"><feGaussianBlur stdDeviation="22" /></filter>
      </defs>
      <path d="M1187 804C1222 806 1250 826 1245 880C1238 970 1160 1070 1149 1187C1141 1262 1172 1312 1254 1340H1293V804z" fill="#eff8fe" />
      <g clipPath="url(#cap)">
        <path d="M900 300h800v520H900z" fill="url(#low)" />
        <path d="M1060 280h470v330L1390 595 1293 560 1200 600 1060 640z" fill="#7d7a70" filter="url(#b22)" />
        <path d="M1255 345C1238 400 1222 440 1214 500C1206 550 1170 590 1130 615L1150 625C1200 615 1226 580 1236 520C1244 440 1256 400 1268 360z" fill="#67645b" filter="url(#b8)" />
        <path d="M1320 345C1322 420 1320 500 1330 545C1345 585 1390 610 1440 615L1425 590C1385 555 1362 520 1360 460C1358 420 1350 390 1335 360z" fill="#5d594e" filter="url(#b8)" />
        <path d="M1202 450C1186 490 1174 530 1166 565L1184 565C1196 525 1206 490 1208 450z" fill="#82847e" filter="url(#b8)" />
        <path d="M1378 440C1392 480 1404 530 1416 570L1400 565C1382 530 1372 490 1368 440z" fill="#868983" filter="url(#b8)" />
        <path d="M1278 340C1276 400 1266 430 1260 460L1312 440C1304 410 1300 390 1298 340z" fill="#a29d8e" filter="url(#b8)" opacity=".85" />
        <ellipse cx="1282" cy="500" rx="15" ry="75" fill="#a09f9b" filter="url(#b8)" />
        <ellipse cx="1287" cy="512" rx="4" ry="36" fill="#b8b7b2" filter="url(#b4)" />
        <path d="M1268 570C1250 600 1220 630 1180 680H1390C1350 630 1320 600 1304 570z" fill="#9b968a" filter="url(#b14)" />
        <path d="M960 765C1060 785 1150 770 1220 790H900z" fill="#67645a" filter="url(#b8)" />
        <path d="M1670 750L1580 758C1500 775 1420 770 1350 790H1670z" fill="#5f5b51" filter="url(#b8)" />
        <path d={capPath} stroke="#b3b09f" strokeWidth="9" fill="none" filter="url(#b4)" />
        <path d="M975 784h640v5H975z" fill="#98988f" filter="url(#b2)" opacity=".7" />
        <path d="M940 795h710v9H940z" fill="#4f4d47" filter="url(#b2)" />
        <ellipse cx="1180" cy="788" rx="110" ry="2" fill="#b9b8ae" filter="url(#b2)" />
        <ellipse cx="1370" cy="788" rx="110" ry="2" fill="#b9b8ae" filter="url(#b2)" />
        <ellipse cx="1273" cy="789" rx="46" ry="4" fill="#fff" filter="url(#b2)" />
      </g>
      <path d="M1293 804H1645" stroke="#333" strokeWidth="1.500" />
      <path d="M1441 570C1461 612 1504 636 1553 678C1586 708 1621 742 1640 773" stroke="#333" strokeWidth="1.500" fill="none" strokeDasharray="3 19" />
      <g fill="none" stroke="#4fb3e2" strokeWidth="2">
        <path d={"M1293 336" + leftEdge + "H1293"} strokeWidth="2.500" />
        <g opacity=".6">
          <path d="M1293 387C1282 415 1268 432 1254 446C1222 490 1218 540 1198 580C1170 650 1125 670 1074 706C1030 740 1000 770 982 804" />
          <path d="M1304 397C1290 425 1278 442 1264 456C1234 500 1228 550 1208 590C1182 655 1140 675 1086 715C1042 750 1012 780 995 804" />
          <path d="M1293 336V804M1000 794H1293" />
        </g>
        <path d="M1187 804C1222 806 1250 826 1245 880C1238 970 1160 1070 1149 1187C1141 1262 1172 1312 1254 1340.500H1293V804M1273.500 794V1340" stroke="#73c5ea" strokeWidth="3" />
      </g>
      <path d="M1295 410h97" stroke="#f5a623" strokeWidth="1.500" opacity=".7" />
      <circle cx="1301" cy="383" r="5" fill="#d5d5d0" fillOpacity=".8" stroke="#888" strokeWidth="1.500" />
      <circle cx="1303" cy="394" r="6" fill="#8b8f92" fillOpacity=".7" stroke="#6e6e6a" strokeWidth="1.500" />
      {knots.map(([x, y]) => (
        <circle key={x + "." + y} cx={x} cy={y} r="5.500" fill="#303234" stroke="#888" strokeWidth="1.500" strokeOpacity=".6" />
      ))}
      <circle cx="992" cy="809" r="5.500" fill="#fff" stroke="#888" strokeWidth="1.500" />
      <circle cx="1293" cy="804" r="5" fill="#222" stroke="#7a57a8" strokeWidth="2.500" />
    </svg>
  );
}

function ViewCube() {
  return (
    <div className="relative h-[130px] w-[140px] font-['Open_Sans',sans-serif] font-bold">
      <span className="absolute top-[7px] left-[34px] text-[22px] leading-[26px] font-semibold text-[#8c8cff]">Z</span>
      <div className="absolute top-[106px] left-[14px] h-[18px] w-[124px] rounded-full bg-[radial-gradient(closest-side,#999,#fff0)]" />
      <button className="absolute top-[32px] left-[33px] flex h-20 w-20 items-center justify-center border-2 border-[#b4b4b4] bg-gradient-to-b from-[#f0f0f0] to-[#d6d6d6]">
        <span className="flex h-[50px] w-[50px] items-center justify-center bg-[#ccd2da]/50 text-[18px] text-[#8f959b]">RIGHT</span>
      </button>
      <span className="absolute top-[102px] left-[22px] text-[20px] leading-[26px] font-semibold text-[#ff7f7f]">X</span>
      <span className="absolute top-[91px] left-[119px] text-[20px] leading-[26px] font-semibold text-[#8cf58c]">Y</span>
      <span className="absolute top-[102px] left-[112px] h-[4px] w-[4px] rounded-full bg-[#8cf58c]" />
    </div>
  );
}

/* ---------- navigation bar ---------- */
const N = "#444958";
const navIcons = [
  ["Orbit", true, "ml-[3px]", "gap-[8px]", <><path d="M11 23V7H8l4-7 4 7h-3v16z" fill="#fff" stroke={N} strokeWidth="1.300" /><path d="M2 14c0-5 21-6 22 0 0 5-14 6-19 3" stroke={N} strokeWidth="2" /><path d="M2 12l1 8 6-3z" fill="#111" /></>],
  ["Look at", false, "ml-[10px]", "", <><path d="M3 8l4-6 1 3 6-4v4l5-3v6" fill="#fff" stroke={N} strokeWidth="1.500" /><path d="M1 8h22v15H1z" fill="#fff" stroke={N} strokeWidth="1.800" /><path d="M5 12h14v7H5z" fill="#9aa0ac" stroke={N} strokeWidth="1.500" /></>],
  ["Pan", false, "ml-[15px]", "", <path d="M7 23c-1-4-5-7-6-10 1-2 3-1 5 2L4 5c0-2 2-2 3 0l2 7-1-9c0-3 3-3 3 0l1 9 2-9c0-2 3-2 3 0l-1 10 3-6c1-2 4-1 3 1l-3 9-3 6z" fill="#fff" stroke={N} strokeWidth="1.400" />],
  ["Zoom", false, "ml-[14px]", "", <><circle cx="8" cy="10" r="7" fill="#e4eeee" stroke={N} strokeWidth="1.500" /><path d="M13 15l6 7" stroke="#333" strokeWidth="4" /><path d="M17 5h7M20.500 1v8M17 11h7" stroke="#333" strokeWidth="1.400" /></>],
  ["Fit", true, "ml-4", "gap-[8px]", <><circle cx="10" cy="9" r="8.500" fill="#e4eeee" stroke="#555" strokeWidth="1.600" /><path d="M6 5h8v8H6z" fill="#fff" stroke="#555" strokeWidth="1.500" /><path d="M16 15l6 7" stroke="#444" strokeWidth="4.500" /></>],
  ["Display settings", true, "ml-[9px]", "gap-[3px]", <><path d="M1 1h22v17H1z" fill="#ddd" stroke="#555" strokeWidth="1.800" /><path d="M4 4h16v11H4z" fill="#93b6e2" stroke={N} /><path d="M8 19h8l2 4H6z" fill="#ddd" stroke="#555" /></>],
  ["Grid and snaps", true, "ml-[10px]", "gap-[3px]", <><path d="M1 1h22v22H1z" fill="#f4f4f4" /><path d="M1 14h22v9H1z" fill="#b9c0d2" /><path d="M1 1h22v22H1zM5.500 1v22M10 1v22M14.500 1v22M19 1v22M1 5.500h22M1 10h22M1 14.500h22M1 19h22" stroke="#555" strokeWidth="1.200" /></>],
  ["Viewports", true, "ml-[10px]", "gap-[3px]", <><path d="M1 1h10v9H1zM13 1h10v9H13zM1 12h10v9H1zM13 12h10v9H13z" fill="#a6c2ea" stroke="#4d5d88" strokeWidth="1.500" /><path d="M4 4h4v3H4zM16 4h4v3h-4zM4 15h4v3H4zM16 15h4v3h-4z" stroke="#6d82b4" /></>],
];

function NavBar() {
  return (
    <nav aria-label="Navigation" className="ml-1 flex h-9 items-center bg-[#f1f1f1] pr-[5px]">
      {navIcons.map(([name, caret, ml, gap, art]) => (
        <button key={name} aria-label={name} className={`flex items-center ${ml} ${gap}`}>
          <Icon size={24} vb="0 0 24 24">{art}</Icon>
          {caret && <Caret />}
        </button>
      ))}
    </nav>
  );
}

/* ---------- timeline ---------- */
const play = [
  ["Go to start", "M1 1h3v22H1zM20 1v22L5 12z"],
  ["Step back", "M1 12 15 2v20zM17 7h4v10h-4z"],
  ["Play", "M3 0v24l17-12z"],
  ["Step forward", "M23 12 9 2v20zM3 7h4v10H3z"],
  ["Go to end", "M23 1h-3v22h3zM4 1v22l15-11z"],
];

function Timeline() {
  return (
    <footer className="flex h-[70px] border-t-2 border-[#dcdcdc] bg-[#f1f1f1]">
      <div className="flex h-[72px] shrink-0 items-center gap-[14px] pl-[14px]">
        {play.map(([name, d]) => (
          <button key={name} aria-label={name}><svg width="24" height="24" className="block"><path d={d} fill="#4a4a4a" /></svg></button>
        ))}
      </div>
      <div className="ml-[23px] flex pt-[22px]">
        <div>
          <ol className="flex">
            {timeline.map((k, i) => {
              const [name, I] = T[k];
              return (
                <li key={i} className="flex w-9 flex-col items-center">
                  <button aria-label={name} className="block h-6"><I /></button>
                  <span className="mt-[5px] h-2 w-[2px] bg-[#cbcbcb]" />
                </li>
              );
            })}
          </ol>
          <div className="mx-[17px] h-[3px] bg-[#cbcbcb]" />
        </div>
        <svg width="18" height="50" viewBox="0 0 18 50" className="mt-[-10px] ml-[-10px]" aria-hidden="true"><path d="M0 0h18v6l-7 8v35H8V14L0 6z" fill="#666" /></svg>
      </div>
      <button aria-label="Timeline settings" className="mt-1 mr-[15px] ml-auto"><Gear /></button>
    </footer>
  );
}

export default function App() {
  return (
    <div className="flex min-h-screen flex-col bg-[#222] pt-[2px] font-['Liberation_Sans',Arial,sans-serif] text-[14px] leading-5">
      <div className="flex flex-1">
        <div className="flex w-[2px] flex-col bg-[#aaa]">
          <div className="h-[49px] bg-[#111]" />
          <div className="h-[104px] bg-[#444]" />
          <div className="mt-auto h-[85px] bg-[#444]" />
        </div>
        <div className="flex min-w-0 flex-1 flex-col overflow-hidden rounded-t-lg bg-white">
          <TitleBar />
          <TabStrip />
          <Ribbon />
          <main className="relative flex flex-1 flex-col border-t-4 border-[#f1f1f1] bg-white">
            <div className="absolute inset-0"><Model /></div>
            <div className="relative flex flex-1 items-start justify-between pt-[6px] pl-[6px]">
              <Browser />
              <div className="pt-[18px] pr-[24px]"><ViewCube /></div>
            </div>
            <div className="relative grid grid-cols-[1fr_auto_1fr] items-end pb-1">
              <aside className="ml-[6px] flex h-[38px] w-[450px] items-center border-x-2 border-b-4 border-x-[#cbcbcb] border-b-black bg-[#f1f1f1] pr-[16px] pl-[35px] text-[#666]">
                <h2 className="flex-1">COMMENTS</h2>
                <button aria-label="Expand comments"><svg width="14" height="14" className="block"><circle cx="7" cy="7" r="7" fill="#333" /><path d="M3 7h8M7 3v8" stroke="#eee" strokeWidth="1.500" /></svg></button>
              </aside>
              <div className="mb-[5px]"><NavBar /></div>
            </div>
          </main>
          <Timeline />
        </div>
      </div>
      <div className="h-2 border-t-2 border-[#444] bg-[#222]" />
    </div>
  );
}
